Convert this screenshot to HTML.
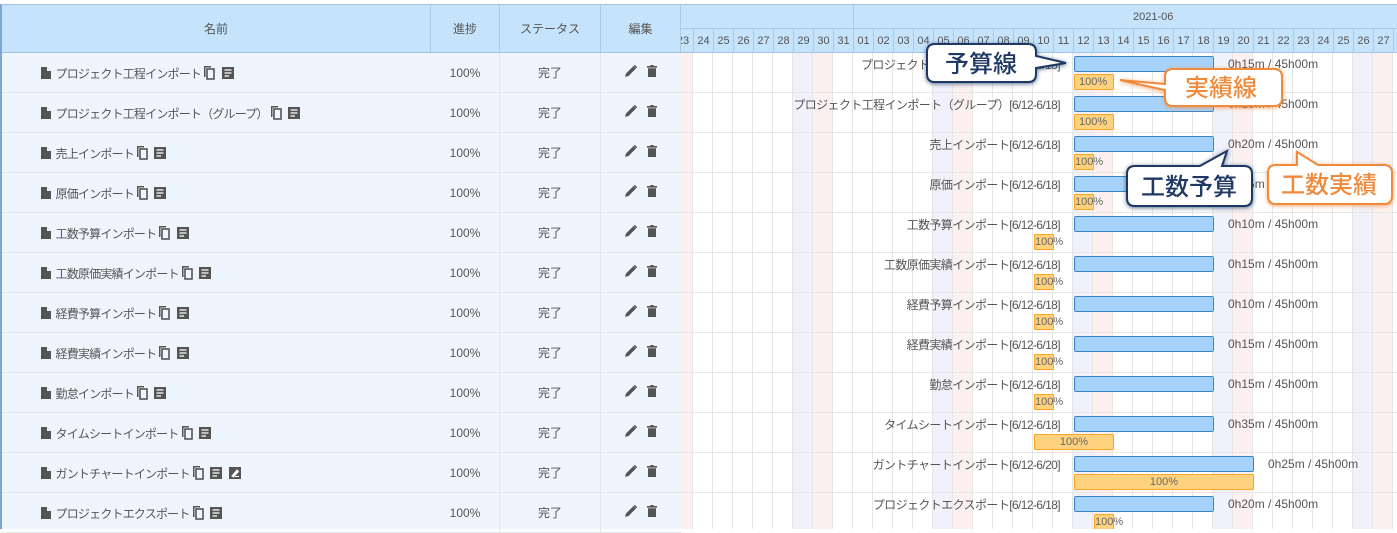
<!DOCTYPE html>
<html><head><meta charset="utf-8">
<style>
*{box-sizing:border-box;margin:0;padding:0}
body{width:1397px;height:529px;overflow:hidden;background:#fff;font-family:"Liberation Sans","Noto Sans CJK JP",sans-serif;font-size:12px;color:#555;position:relative}
.left{position:absolute;left:0;top:4px;width:681px;height:525px;background:#eef5fc;border-left:2px solid #7aa7d6;border-top:1px solid #9fc3e6}
.hd{position:absolute;top:0;height:48px;background:#c5e3fb;border-bottom:1px solid #9fc3e6;border-right:1px solid #a9cbe8;text-align:center;line-height:48px;color:#555}
.row{position:absolute;left:0;width:679px;height:40px;border-bottom:1px solid #e4e8ec}
.c{position:absolute;top:0;height:40px;line-height:40px;text-align:center;border-right:1px solid #e4e8ec}
.nm{position:absolute;left:39px;top:0;height:40px;display:flex;align-items:center;gap:2px;color:#555;letter-spacing:-0.8px}
.g{position:absolute;left:681px;top:4px;width:716px;height:525px;overflow:hidden;border-top:1px solid #9fc3e6}
.sat{position:absolute;top:48px;bottom:0;width:20px;background:#f1f1fb}
.sun{position:absolute;top:48px;bottom:0;width:20px;background:#fcf0f0}
.gh{position:absolute;left:0;top:0;width:716px;height:48px;background:#c5e3fb;border-bottom:1px solid #9fc3e6}
.day{position:absolute;top:24px;height:24px;width:20px;line-height:24px;text-align:center;border-left:1px solid #a9cbe8;font-size:11px;color:#555}
.lb{position:absolute;width:600px;text-align:right;white-space:nowrap;color:#555;letter-spacing:-0.6px}
.bb{position:absolute;height:16px;background:#a7d2fb;border:1px solid #3a86c8;border-radius:2px}
.ob{position:absolute;height:16px;background:#ffd280;border:1px solid #f5a623;border-radius:1px;font-size:11px;line-height:14px;white-space:nowrap;color:#666}
.tm{position:absolute;white-space:nowrap;color:#555}
</style></head><body>
<div class="left">
<div class="hd" style="left:0;width:429px">名前</div>
<div class="hd" style="left:429px;width:69px">進捗</div>
<div class="hd" style="left:498px;width:101px">ステータス</div>
<div class="hd" style="left:599px;width:80px">編集</div>
</div>
<div class="g">
<div class="sun" style="left:-1px;width:13px"></div>
<div class="sat" style="left:112px"></div><div class="sun" style="left:132px"></div>
<div class="sat" style="left:252px"></div><div class="sun" style="left:272px"></div>
<div class="sat" style="left:392px"></div><div class="sun" style="left:412px"></div>
<div class="sat" style="left:532px"></div><div class="sun" style="left:552px"></div>
<div class="sat" style="left:672px"></div><div class="sun" style="left:692px"></div>
<div style="position:absolute;left:0;top:48px;width:716px;bottom:0;background:repeating-linear-gradient(90deg,transparent 0 11px,#e6e6e6 11px 12px,transparent 12px 20px)"></div>
<div style="position:absolute;left:0;top:48px;width:716px;bottom:0;background:repeating-linear-gradient(180deg,transparent 0 39px,#e6e6e6 39px 40px)"></div>
<div class="gh">
<div style="position:absolute;left:172px;top:0;width:544px;height:24px;border-left:1px solid #a9cbe8;border-bottom:1px solid #a9cbe8;line-height:24px;font-size:11px;padding-left:279px">2021-06</div>
<div style="position:absolute;left:0;top:23px;width:172px;height:1px;background:#a9cbe8"></div>
<div class="day" style="left:-8px;border:0">23</div>
<div class="day" style="left:12px">24</div><div class="day" style="left:32px">25</div><div class="day" style="left:52px">26</div><div class="day" style="left:72px">27</div><div class="day" style="left:92px">28</div><div class="day" style="left:112px">29</div><div class="day" style="left:132px">30</div><div class="day" style="left:152px">31</div>
<div class="day" style="left:172px">01</div><div class="day" style="left:192px">02</div><div class="day" style="left:212px">03</div><div class="day" style="left:232px">04</div><div class="day" style="left:252px">05</div><div class="day" style="left:272px">06</div><div class="day" style="left:292px">07</div><div class="day" style="left:312px">08</div><div class="day" style="left:332px">09</div><div class="day" style="left:352px">10</div><div class="day" style="left:372px">11</div><div class="day" style="left:392px">12</div><div class="day" style="left:412px">13</div><div class="day" style="left:432px">14</div><div class="day" style="left:452px">15</div><div class="day" style="left:472px">16</div><div class="day" style="left:492px">17</div><div class="day" style="left:512px">18</div><div class="day" style="left:532px">19</div><div class="day" style="left:552px">20</div><div class="day" style="left:572px">21</div><div class="day" style="left:592px">22</div><div class="day" style="left:612px">23</div><div class="day" style="left:632px">24</div><div class="day" style="left:652px">25</div><div class="day" style="left:672px">26</div><div class="day" style="left:692px">27</div><div class="day" style="left:712px">28</div>
</div>
</div>

<svg width="0" height="0" style="position:absolute"><defs>
<symbol id="doc" viewBox="0 0 10 12"><path d="M0 0H6L10 4V12H0Z" fill="#555"/><path d="M6 0V4H10" fill="#eef5fc"/></symbol>
<symbol id="cp" viewBox="0 0 12 14"><path d="M1 0H8V1.5H2.5V11H1Z" fill="#555"/><rect x="4" y="3" width="7" height="10" fill="none" stroke="#555" stroke-width="1.6"/></symbol>
<symbol id="cm" viewBox="0 0 12 12"><path d="M0 0H12V12H0Z" fill="#555"/><path d="M2.5 3H9.5M2.5 6H9.5M2.5 9H7" stroke="#fff" stroke-width="1.2"/></symbol>
<symbol id="pen" viewBox="0 0 12 12"><path d="M0 12L1 8.5L8.5 1L11 3.5L3.5 11Z" fill="#555"/><path d="M9.3 0.3L11.7 2.7" stroke="#555" stroke-width="1.5"/></symbol>
<symbol id="tr" viewBox="0 0 10 12"><path d="M0 1H10V2.6H0Z M1 3.2H9V12H1Z M3.5 0H6.5V1H3.5Z" fill="#555"/></symbol>
</defs></svg>

<div style="position:absolute;left:2px;top:53px;width:679px;height:480px">
<div class="row" style="top:0"><div class="nm"><svg width="10" height="12"><use href="#doc"/></svg>&nbsp;プロジェクト工程インポート<svg width="12" height="14"><use href="#cp"/></svg>&nbsp;<svg width="12" height="12"><use href="#cm"/></svg></div><div class="c" style="left:429px;width:69px">100%</div><div class="c" style="left:498px;width:101px">完了</div><div class="c" style="left:599px;width:80px;border:0"><svg width="12" height="12"><use href="#pen"/></svg>&nbsp;&nbsp;&nbsp;<svg width="10" height="12"><use href="#tr"/></svg></div></div>
<div class="row" style="top:40px"><div class="nm"><svg width="10" height="12"><use href="#doc"/></svg>&nbsp;プロジェクト工程インポート（グループ）<svg width="12" height="14"><use href="#cp"/></svg>&nbsp;<svg width="12" height="12"><use href="#cm"/></svg></div><div class="c" style="left:429px;width:69px">100%</div><div class="c" style="left:498px;width:101px">完了</div><div class="c" style="left:599px;width:80px;border:0"><svg width="12" height="12"><use href="#pen"/></svg>&nbsp;&nbsp;&nbsp;<svg width="10" height="12"><use href="#tr"/></svg></div></div>
<div class="row" style="top:80px"><div class="nm"><svg width="10" height="12"><use href="#doc"/></svg>&nbsp;売上インポート<svg width="12" height="14"><use href="#cp"/></svg>&nbsp;<svg width="12" height="12"><use href="#cm"/></svg></div><div class="c" style="left:429px;width:69px">100%</div><div class="c" style="left:498px;width:101px">完了</div><div class="c" style="left:599px;width:80px;border:0"><svg width="12" height="12"><use href="#pen"/></svg>&nbsp;&nbsp;&nbsp;<svg width="10" height="12"><use href="#tr"/></svg></div></div>
<div class="row" style="top:120px"><div class="nm"><svg width="10" height="12"><use href="#doc"/></svg>&nbsp;原価インポート<svg width="12" height="14"><use href="#cp"/></svg>&nbsp;<svg width="12" height="12"><use href="#cm"/></svg></div><div class="c" style="left:429px;width:69px">100%</div><div class="c" style="left:498px;width:101px">完了</div><div class="c" style="left:599px;width:80px;border:0"><svg width="12" height="12"><use href="#pen"/></svg>&nbsp;&nbsp;&nbsp;<svg width="10" height="12"><use href="#tr"/></svg></div></div>
<div class="row" style="top:160px"><div class="nm"><svg width="10" height="12"><use href="#doc"/></svg>&nbsp;工数予算インポート<svg width="12" height="14"><use href="#cp"/></svg>&nbsp;<svg width="12" height="12"><use href="#cm"/></svg></div><div class="c" style="left:429px;width:69px">100%</div><div class="c" style="left:498px;width:101px">完了</div><div class="c" style="left:599px;width:80px;border:0"><svg width="12" height="12"><use href="#pen"/></svg>&nbsp;&nbsp;&nbsp;<svg width="10" height="12"><use href="#tr"/></svg></div></div>
<div class="row" style="top:200px"><div class="nm"><svg width="10" height="12"><use href="#doc"/></svg>&nbsp;工数原価実績インポート<svg width="12" height="14"><use href="#cp"/></svg>&nbsp;<svg width="12" height="12"><use href="#cm"/></svg></div><div class="c" style="left:429px;width:69px">100%</div><div class="c" style="left:498px;width:101px">完了</div><div class="c" style="left:599px;width:80px;border:0"><svg width="12" height="12"><use href="#pen"/></svg>&nbsp;&nbsp;&nbsp;<svg width="10" height="12"><use href="#tr"/></svg></div></div>
<div class="row" style="top:240px"><div class="nm"><svg width="10" height="12"><use href="#doc"/></svg>&nbsp;経費予算インポート<svg width="12" height="14"><use href="#cp"/></svg>&nbsp;<svg width="12" height="12"><use href="#cm"/></svg></div><div class="c" style="left:429px;width:69px">100%</div><div class="c" style="left:498px;width:101px">完了</div><div class="c" style="left:599px;width:80px;border:0"><svg width="12" height="12"><use href="#pen"/></svg>&nbsp;&nbsp;&nbsp;<svg width="10" height="12"><use href="#tr"/></svg></div></div>
<div class="row" style="top:280px"><div class="nm"><svg width="10" height="12"><use href="#doc"/></svg>&nbsp;経費実績インポート<svg width="12" height="14"><use href="#cp"/></svg>&nbsp;<svg width="12" height="12"><use href="#cm"/></svg></div><div class="c" style="left:429px;width:69px">100%</div><div class="c" style="left:498px;width:101px">完了</div><div class="c" style="left:599px;width:80px;border:0"><svg width="12" height="12"><use href="#pen"/></svg>&nbsp;&nbsp;&nbsp;<svg width="10" height="12"><use href="#tr"/></svg></div></div>
<div class="row" style="top:320px"><div class="nm"><svg width="10" height="12"><use href="#doc"/></svg>&nbsp;勤怠インポート<svg width="12" height="14"><use href="#cp"/></svg>&nbsp;<svg width="12" height="12"><use href="#cm"/></svg></div><div class="c" style="left:429px;width:69px">100%</div><div class="c" style="left:498px;width:101px">完了</div><div class="c" style="left:599px;width:80px;border:0"><svg width="12" height="12"><use href="#pen"/></svg>&nbsp;&nbsp;&nbsp;<svg width="10" height="12"><use href="#tr"/></svg></div></div>
<div class="row" style="top:360px"><div class="nm"><svg width="10" height="12"><use href="#doc"/></svg>&nbsp;タイムシートインポート<svg width="12" height="14"><use href="#cp"/></svg>&nbsp;<svg width="12" height="12"><use href="#cm"/></svg></div><div class="c" style="left:429px;width:69px">100%</div><div class="c" style="left:498px;width:101px">完了</div><div class="c" style="left:599px;width:80px;border:0"><svg width="12" height="12"><use href="#pen"/></svg>&nbsp;&nbsp;&nbsp;<svg width="10" height="12"><use href="#tr"/></svg></div></div>
<div class="row" style="top:400px"><div class="nm"><svg width="10" height="12"><use href="#doc"/></svg>&nbsp;ガントチャートインポート<svg width="12" height="14"><use href="#cp"/></svg>&nbsp;<svg width="12" height="12"><use href="#cm"/></svg>&nbsp;<svg width="12" height="12"><rect width="12" height="12" fill="#555"/><path d="M3 9L8 3L9.5 4.5L4.5 10Z M6 9.5H10" stroke="#fff" stroke-width="1" fill="#fff"/></svg></div><div class="c" style="left:429px;width:69px">100%</div><div class="c" style="left:498px;width:101px">完了</div><div class="c" style="left:599px;width:80px;border:0"><svg width="12" height="12"><use href="#pen"/></svg>&nbsp;&nbsp;&nbsp;<svg width="10" height="12"><use href="#tr"/></svg></div></div>
<div class="row" style="top:440px"><div class="nm"><svg width="10" height="12"><use href="#doc"/></svg>&nbsp;プロジェクトエクスポート<svg width="12" height="14"><use href="#cp"/></svg>&nbsp;<svg width="12" height="12"><use href="#cm"/></svg></div><div class="c" style="left:429px;width:69px">100%</div><div class="c" style="left:498px;width:101px">完了</div><div class="c" style="left:599px;width:80px;border:0"><svg width="12" height="12"><use href="#pen"/></svg>&nbsp;&nbsp;&nbsp;<svg width="10" height="12"><use href="#tr"/></svg></div></div>
</div>

<div style="position:absolute;left:0;top:0;width:1397px;height:529px;overflow:hidden">
<div class="lb" style="left:460px;top:56px">プロジェクト工程インポート[6/12-6/18]</div><div class="bb" style="left:1074px;top:56px;width:140px"></div><div class="ob" style="left:1074px;top:74px;width:40px;padding-left:4px">100%</div><div class="tm" style="left:1228px;top:57px">0h15m / 45h00m</div>
<div class="lb" style="left:460px;top:96px">プロジェクト工程インポート（グループ）[6/12-6/18]</div><div class="bb" style="left:1074px;top:96px;width:140px"></div><div class="ob" style="left:1074px;top:114px;width:40px;padding-left:4px">100%</div><div class="tm" style="left:1228px;top:97px">0h15m / 45h00m</div>
<div class="lb" style="left:460px;top:136px">売上インポート[6/12-6/18]</div><div class="bb" style="left:1074px;top:136px;width:140px"></div><div class="ob" style="left:1074px;top:154px;width:20px">100%</div><div class="tm" style="left:1228px;top:137px">0h20m / 45h00m</div>
<div class="lb" style="left:460px;top:176px">原価インポート[6/12-6/18]</div><div class="bb" style="left:1074px;top:176px;width:140px"></div><div class="ob" style="left:1074px;top:194px;width:20px">100%</div><div class="tm" style="left:1228px;top:177px">0h15m / 45h00m</div>
<div class="lb" style="left:460px;top:216px">工数予算インポート[6/12-6/18]</div><div class="bb" style="left:1074px;top:216px;width:140px"></div><div class="ob" style="left:1034px;top:234px;width:20px">100%</div><div class="tm" style="left:1228px;top:217px">0h10m / 45h00m</div>
<div class="lb" style="left:460px;top:256px">工数原価実績インポート[6/12-6/18]</div><div class="bb" style="left:1074px;top:256px;width:140px"></div><div class="ob" style="left:1034px;top:274px;width:20px">100%</div><div class="tm" style="left:1228px;top:257px">0h15m / 45h00m</div>
<div class="lb" style="left:460px;top:296px">経費予算インポート[6/12-6/18]</div><div class="bb" style="left:1074px;top:296px;width:140px"></div><div class="ob" style="left:1034px;top:314px;width:20px">100%</div><div class="tm" style="left:1228px;top:297px">0h10m / 45h00m</div>
<div class="lb" style="left:460px;top:336px">経費実績インポート[6/12-6/18]</div><div class="bb" style="left:1074px;top:336px;width:140px"></div><div class="ob" style="left:1034px;top:354px;width:20px">100%</div><div class="tm" style="left:1228px;top:337px">0h15m / 45h00m</div>
<div class="lb" style="left:460px;top:376px">勤怠インポート[6/12-6/18]</div><div class="bb" style="left:1074px;top:376px;width:140px"></div><div class="ob" style="left:1034px;top:394px;width:20px">100%</div><div class="tm" style="left:1228px;top:377px">0h15m / 45h00m</div>
<div class="lb" style="left:460px;top:416px">タイムシートインポート[6/12-6/18]</div><div class="bb" style="left:1074px;top:416px;width:140px"></div><div class="ob" style="left:1034px;top:434px;width:80px;text-align:center">100%</div><div class="tm" style="left:1228px;top:417px">0h35m / 45h00m</div>
<div class="lb" style="left:460px;top:456px">ガントチャートインポート[6/12-6/20]</div><div class="bb" style="left:1074px;top:456px;width:180px"></div><div class="ob" style="left:1074px;top:474px;width:180px;text-align:center">100%</div><div class="tm" style="left:1268px;top:457px">0h25m / 45h00m</div>
<div class="lb" style="left:460px;top:496px">プロジェクトエクスポート[6/12-6/18]</div><div class="bb" style="left:1074px;top:496px;width:140px"></div><div class="ob" style="left:1094px;top:514px;width:20px">100%</div><div class="tm" style="left:1228px;top:497px">0h20m / 45h00m</div>
</div>

<svg width="1397" height="529" style="position:absolute;left:0;top:0">
<defs>
<filter id="sn" x="-20%" y="-30%" width="140%" height="160%"><feDropShadow dx="0" dy="1" stdDeviation="2" flood-color="#1f3864" flood-opacity="0.7"/></filter>
<filter id="so" x="-20%" y="-30%" width="140%" height="160%"><feDropShadow dx="0" dy="1" stdDeviation="2" flood-color="#f08a3c" flood-opacity="0.7"/></filter>
</defs>
<g font-family="Liberation Sans,Noto Sans CJK JP,sans-serif" font-size="24" font-weight="500" text-anchor="middle">
<path d="M935 44H1028Q1036 44 1036 52V56L1066 63L1036 68V74Q1036 82 1028 82H935Q927 82 927 74V52Q927 44 935 44Z" fill="#fff" stroke="#1f3864" stroke-width="2" filter="url(#sn)"/>
<text x="981" y="72" fill="#1f3864">予算線</text>
<path d="M1173 69H1274Q1282 69 1282 77V98Q1282 106 1274 106H1173Q1165 106 1165 98V90L1120 80L1165 84V77Q1165 69 1173 69Z" fill="#fff" stroke="#f08a3c" stroke-width="2" filter="url(#so)"/>
<text x="1221" y="96" fill="#f08a3c">実績線</text>
<path d="M1135 166H1200L1227 151L1222 166H1244Q1252 166 1252 174V198Q1252 206 1244 206H1135Q1127 206 1127 198V174Q1127 166 1135 166Z" fill="#fff" stroke="#1f3864" stroke-width="2" filter="url(#sn)"/>
<text x="1189" y="195" fill="#1f3864">工数予算</text>
<path d="M1276 165H1297V152L1318 165H1384Q1392 165 1392 173V196Q1392 204 1384 204H1276Q1268 204 1268 196V173Q1268 165 1276 165Z" fill="#fff" stroke="#f08a3c" stroke-width="2" filter="url(#so)"/>
<text x="1329" y="193" fill="#f08a3c">工数実績</text>
</g>
</svg>
</body></html>
